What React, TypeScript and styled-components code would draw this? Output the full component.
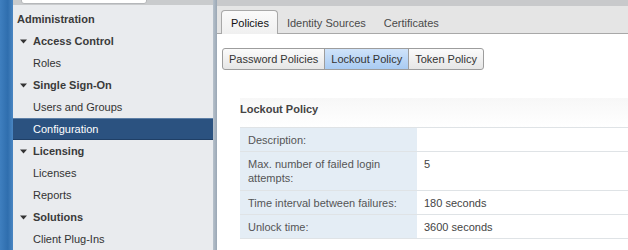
import React from "react";
import styled, { createGlobalStyle } from "styled-components";

const GlobalStyle = createGlobalStyle`
  html, body {
    margin: 0;
    padding: 0;
    background: #ffffff;
  }
  body {
    font-family: "Liberation Sans", Arial, sans-serif;
    font-size: 11px;
    color: #333;
  }
`;

type NavItem = {
  label: string;
  kind: "root" | "group" | "leaf";
  selected?: boolean;
};

const navItems: NavItem[] = [
  { label: "Administration", kind: "root" },
  { label: "Access Control", kind: "group" },
  { label: "Roles", kind: "leaf" },
  { label: "Single Sign-On", kind: "group" },
  { label: "Users and Groups", kind: "leaf" },
  { label: "Configuration", kind: "leaf", selected: true },
  { label: "Licensing", kind: "group" },
  { label: "Licenses", kind: "leaf" },
  { label: "Reports", kind: "leaf" },
  { label: "Solutions", kind: "group" },
  { label: "Client Plug-Ins", kind: "leaf" },
];

const rows = [
  { label: "Description:", value: "", tall: false },
  { label: "Max. number of failed login attempts:", value: "5", tall: true },
  { label: "Time interval between failures:", value: "180 seconds", tall: false },
  { label: "Unlock time:", value: "3600 seconds", tall: false },
];

const Caret = () => (
  <svg width="7" height="5" viewBox="0 0 7 5">
    <path d="M0 0.5 L7 0.5 L3.5 4.5 Z" fill="#333" />
  </svg>
);

export default function App() {
  return (
    <>
      <GlobalStyle />
      <Shell>
        <Strip />
        <Sidebar>
          <SideTop>
            <SearchBox />
          </SideTop>
          <NavList>
            {navItems.map((item) => (
              <NavRow key={item.label} $kind={item.kind} $selected={!!item.selected}>
                {item.kind === "group" && (
                  <CaretBox>
                    <Caret />
                  </CaretBox>
                )}
                {item.label}
              </NavRow>
            ))}
          </NavList>
        </Sidebar>
        <Divider />
        <Main>
          <MainTop />
          <TabBar>
            <Tab $active>Policies</Tab>
            <Tab>Identity Sources</Tab>
            <Tab>Certificates</Tab>
          </TabBar>
          <Body>
            <ButtonGroup>
              <SegButton>Password Policies</SegButton>
              <SegButton $active>Lockout Policy</SegButton>
              <SegButton>Token Policy</SegButton>
            </ButtonGroup>
            <Section>
              <SectionHead>Lockout Policy</SectionHead>
              <Table>
                {rows.map((r) => (
                  <Row key={r.label} $tall={r.tall}>
                    <LabelCell>{r.label}</LabelCell>
                    <ValueCell>{r.value}</ValueCell>
                  </Row>
                ))}
              </Table>
            </Section>
          </Body>
        </Main>
      </Shell>
    </>
  );
}

const Shell = styled.div`
  display: flex;
  width: 628px;
  height: 250px;
  overflow: hidden;
  background: #fff;
`;

const Strip = styled.div`
  width: 13px;
  flex-shrink: 0;
  background: linear-gradient(90deg, #3f7fbf 0%, #2f6eae 60%, #4a86c2 100%);
`;

const Sidebar = styled.div`
  width: 200px;
  flex-shrink: 0;
  background: #e9ebee;
  display: flex;
  flex-direction: column;
`;

const SideTop = styled.div`
  height: 5px;
  background: #c9cbcd;
  display: flex;
  align-items: flex-end;
  padding-left: 8px;
  overflow: hidden;
`;

const SearchBox = styled.div`
  width: 124px;
  height: 8px;
  margin-bottom: 1px;
  background: #fff;
  border: 1px solid #b5b7ba;
  border-radius: 3px;
`;

const NavList = styled.div`
  display: flex;
  flex-direction: column;
  padding-top: 3px;
`;

const NavRow = styled.div<{ $kind: string; $selected: boolean }>`
  height: 22px;
  display: flex;
  align-items: center;
  padding-left: ${(p) => (p.$kind === "root" ? 4 : p.$kind === "group" ? 7 : 20)}px;
  font-size: 11px;
  color: ${(p) => (p.$selected ? "#ffffff" : p.$kind === "leaf" ? "#333" : "#3a3a3a")};
  font-weight: ${(p) => (p.$kind === "leaf" ? "normal" : "bold")};
  background: ${(p) => (p.$selected ? "#2b5280" : "transparent")};
  border-top: 1px solid ${(p) => (p.$selected ? "#5d7fa6" : "transparent")};
  border-bottom: 1px solid ${(p) => (p.$selected ? "#1f3f66" : "transparent")};
  box-sizing: border-box;
`;

const CaretBox = styled.span`
  display: inline-flex;
  width: 13px;
  align-items: center;
`;

const Divider = styled.div`
  width: 4px;
  flex-shrink: 0;
  background: linear-gradient(90deg, #b7c1cb, #9aa7b5);
`;

const Main = styled.div`
  flex: 1;
  display: flex;
  flex-direction: column;
  min-width: 0;
`;

const MainTop = styled.div`
  height: 6px;
  background: #c8c9cb;
`;

const TabBar = styled.div`
  height: 28px;
  background: #e5e5e5;
  border-bottom: 1px solid #a8a8a8;
  display: flex;
  align-items: flex-end;
  padding-left: 4px;
  box-sizing: border-box;
`;

const Tab = styled.div<{ $active?: boolean }>`
  height: ${(p) => (p.$active ? 23 : 22)}px;
  padding: 0 8px 0 ${(p) => (p.$active ? 9 : 8)}px;
  display: flex;
  align-items: center;
  font-size: 11px;
  color: ${(p) => (p.$active ? "#111" : "#4a4a4a")};
  background: ${(p) => (p.$active ? "linear-gradient(#fafafa, #f0f0f0)" : "transparent")};
  border: 1px solid ${(p) => (p.$active ? "#a8a8a8" : "transparent")};
  border-bottom: none;
  border-radius: 4px 4px 0 0;
  margin-bottom: -1px;
`;

const Body = styled.div`
  flex: 1;
  background: #fff;
  padding: 14px 0 0 5px;
  display: flex;
  flex-direction: column;
`;

const ButtonGroup = styled.div`
  display: flex;
`;

const SegButton = styled.div<{ $active?: boolean }>`
  height: 22px;
  padding: 0 6px;
  display: flex;
  align-items: center;
  font-size: 11px;
  color: #333;
  box-sizing: border-box;
  background: ${(p) =>
    p.$active ? "linear-gradient(#cfe3fa, #a9cbf2)" : "linear-gradient(#fbfbfb, #e6e6e6)"};
  border: 1px solid #9d9d9d;
  margin-left: -1px;
  &:first-child {
    margin-left: 0;
    border-radius: 3px 0 0 3px;
  }
  &:last-child {
    border-radius: 0 3px 3px 0;
  }
`;

const Section = styled.div`
  margin: 28px 0 0 18px;
  display: flex;
  flex-direction: column;
`;

const SectionHead = styled.div`
  height: 29px;
  box-sizing: border-box;
  padding-top: 5px;
  font-weight: bold;
  font-size: 11px;
  color: #444;
  background: linear-gradient(#f7f7f7, #ffffff);
`;

const Table = styled.div`
  display: flex;
  flex-direction: column;
  border-top: 1px solid #dfe3e6;
`;

const Row = styled.div<{ $tall: boolean }>`
  display: grid;
  grid-template-columns: 177px 1fr;
  height: ${(p) => (p.$tall ? 39 : 24)}px;
  border-bottom: 1px solid #dfe3e6;
  box-sizing: border-box;
`;

const LabelCell = styled.div`
  background: #e4edf5;
  padding: 5px 8px 0 8px;
  font-size: 11px;
  line-height: 14px;
  color: #555;
`;

const ValueCell = styled.div`
  padding: 5px 8px 0 7px;
  font-size: 11px;
  line-height: 14px;
  color: #444;
`;
